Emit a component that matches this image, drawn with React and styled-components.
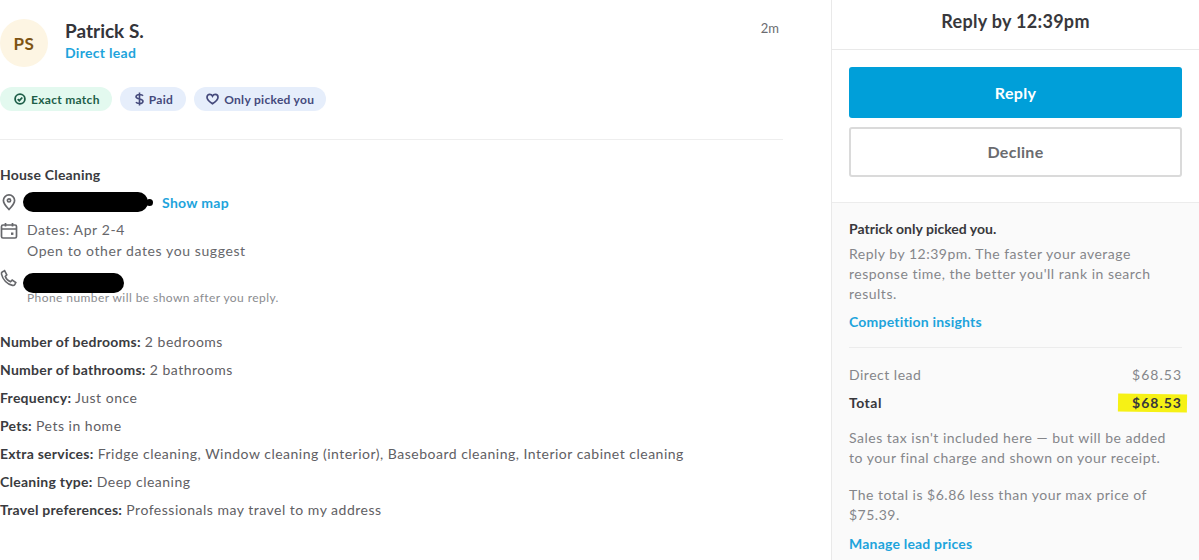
import styled, { createGlobalStyle } from "styled-components";

const GlobalStyle = createGlobalStyle`
  html, body {
    margin: 0;
    padding: 0;
    background: #fff;
  }
  body {
    font-family: "Lato", "Open Sans", sans-serif;
    color: #2f3033;
  }
`;

const Page = styled.div`
  display: flex;
  width: 1199px;
  height: 560px;
  overflow: hidden;
`;

const Main = styled.div`
  width: 783px;
  margin-right: 48px;
  flex-shrink: 0;
`;

const Head = styled.div`
  display: flex;
  align-items: flex-start;
  padding-top: 19px;
`;

const Avatar = styled.div`
  width: 48px;
  height: 48px;
  border-radius: 50%;
  background: #fdf5e3;
  color: #7d5413;
  font-weight: 700;
  font-size: 17px;
  letter-spacing: 0.5px;
  display: flex;
  align-items: center;
  justify-content: center;
`;

const HeadText = styled.div`
  margin-left: 17px;
  flex: 1;
`;

const Name = styled.div`
  font-size: 19px;
  font-weight: 700;
  line-height: 24px;
  color: #33343a;
`;

const DirectLead = styled.div`
  font-size: 14px;
  font-weight: 700;
  line-height: 20px;
  color: #1ea4dc;
  letter-spacing: 0.3px;
`;

const Time = styled.div`
  font-size: 13px;
  color: #6b6c70;
  margin-top: 1px;
  margin-right: 4px;
`;

const Tags = styled.div`
  display: flex;
  gap: 8px;
  margin-top: 20px;
  padding-bottom: 28px;
  border-bottom: 1px solid #eeeeee;
`;

const Tag = styled.div`
  display: flex;
  align-items: center;
  gap: 5px;
  height: 24px;
  padding: 0 ${(props) => props.$right || 12}px 0 ${(props) => props.$left || 12}px;
  border-radius: 12px;
  font-size: 12px;
  font-weight: 700;
  letter-spacing: 0.3px;
  background: ${(props) => (props.$green ? "#e3f9ef" : "#e6eefb")};
  color: ${(props) => (props.$green ? "#1d5e48" : "#454a7c")};
`;

const Section = styled.div`
  margin-top: 25px;
`;

const Service = styled.div`
  font-size: 14px;
  font-weight: 700;
  line-height: 20px;
  letter-spacing: 0.2px;
  color: #3a3b40;
`;

const InfoRow = styled.div`
  display: flex;
  align-items: flex-start;
  gap: 9px;
  margin-top: ${(props) => props.$top}px;
  font-size: 14px;
  line-height: 21px;
  color: #66676b;
  letter-spacing: 0.6px;
`;

const IconSlot = styled.div`
  width: 18px;
  height: 24px;
  margin-top: ${(props) => props.$offset}px;
  display: flex;
  align-items: center;
  justify-content: center;
  flex-shrink: 0;
  color: #66676b;
`;

const Redacted = styled.div`
  position: relative;
  width: ${(props) => props.$width}px;
  height: 20px;
  background: #000;
  border-radius: 10px;
  flex-shrink: 0;
  margin: ${(props) => props.$top}px 0 0 -4px;

  &::after {
    content: "";
    display: ${(props) => (props.$bump ? "block" : "none")};
    position: absolute;
    right: -5px;
    top: 7px;
    width: 7px;
    height: 7px;
    border-radius: 50%;
    background: #000;
  }
`;

const MapLink = styled.span`
  color: #1ea4dc;
  font-weight: 700;
  font-size: 14px;
  line-height: 24px;
  letter-spacing: 0.3px;
  margin-left: 5px;
`;

const Hint = styled.div`
  font-size: 12px;
  line-height: 14px;
  margin-top: -2px;
  color: #8b8c90;
  letter-spacing: 0.42px;
`;

const Details = styled.div`
  margin-top: 23px;
`;

const Detail = styled.div`
  font-size: 14px;
  line-height: 28px;
  color: #5f6064;
  letter-spacing: 0.5px;

  b {
    font-weight: 700;
    color: #3a3b40;
    letter-spacing: 0.25px;
  }
`;

const Side = styled.div`
  flex: 1;
  border-left: 1px solid #e9e9e9;
  display: flex;
  flex-direction: column;
`;

const SideHead = styled.div`
  height: 49px;
  border-bottom: 1px solid #e9e9e9;
  text-align: center;
  font-size: 18px;
  font-weight: 700;
  line-height: 43px;
  letter-spacing: 0.3px;
  color: #38383c;
`;

const Actions = styled.div`
  padding: 17px 17px 25px;
  border-bottom: 1px solid #ececec;
  display: flex;
  flex-direction: column;
  gap: 9px;
`;

const Button = styled.div`
  height: ${(props) => (props.$primary ? 51 : 50)}px;
  padding-bottom: ${(props) => (props.$primary ? 0 : 2)}px;
  border-radius: 3px;
  display: flex;
  align-items: center;
  justify-content: center;
  font-size: 16px;
  font-weight: 700;
  letter-spacing: 0.3px;
  box-sizing: border-box;
  background: ${(props) => (props.$primary ? "#009fd9" : "#fff")};
  color: ${(props) => (props.$primary ? "#fff" : "#6a6b6f")};
  border: ${(props) => (props.$primary ? "none" : "2px solid #dadada")};
`;

const Notes = styled.div`
  flex: 1;
  background: #fafafa;
  padding: 16px 17px 0;
`;

const NoteTitle = styled.div`
  font-size: 14px;
  font-weight: 700;
  line-height: 20px;
  color: #38383c;
`;

const NoteText = styled.div`
  font-size: 14px;
  line-height: 20px;
  color: #85868a;
  letter-spacing: 0.5px;
  margin-top: ${(props) => props.$top}px;
`;

const NoteLink = styled.div`
  color: #1ea4dc;
  font-weight: 700;
  font-size: 14px;
  line-height: 20px;
  letter-spacing: 0.2px;
  margin-top: ${(props) => props.$top}px;
`;

const Rule = styled.div`
  height: 1px;
  background: #ececec;
  margin: 15px 0 17px;
`;

const PriceRow = styled.div`
  display: flex;
  justify-content: space-between;
  font-size: 14px;
  line-height: 20px;
  letter-spacing: 0.5px;
  margin-bottom: 8px;
  color: ${(props) => (props.$total ? "#38383c" : "#85868a")};
  font-weight: ${(props) => (props.$total ? 700 : 400)};
`;

const Price = styled.span`
  letter-spacing: 1px;
`;

const Highlight = styled(Price)`
  position: relative;
  z-index: 0;

  &::before {
    content: "";
    position: absolute;
    z-index: -1;
    left: -14px;
    right: -5px;
    top: 1px;
    bottom: 1px;
    background: #f6f115;
    transform: rotate(1deg);
  }
`;

const Pin = () => (
  <svg width="16" height="18" viewBox="0 0 16 18" fill="none" stroke="currentColor" strokeWidth="1.7">
    <path d="M8 16.500c-3.500-3.600-5.600-6.400-5.600-9a5.600 5.600 0 0 1 11.200 0c0 2.600-2.100 5.400-5.600 9z" />
    <circle cx="8" cy="7.400" r="1.600" />
  </svg>
);

const Calendar = () => (
  <svg width="18" height="18" viewBox="0 0 18 18" fill="none" stroke="currentColor" strokeWidth="1.7">
    <rect x="1.500" y="3" width="15" height="13" rx="1.500" />
    <path d="M1.500 7h15M5.500 1v3.500M12.500 1v3.500" />
    <rect x="11" y="10.500" width="2.400" height="2.400" fill="currentColor" stroke="none" />
  </svg>
);

const Phone = () => (
  <svg width="18" height="18" viewBox="0 0 18 18" fill="none" stroke="currentColor" strokeWidth="1.6">
    <path d="M4.600 1.600 2.200 3c-.7.500-.9 1.300-.7 2.200 1.100 5.300 5.900 10.300 11 11.200 1 .2 1.800-.1 2.300-.9l1-2-3.600-2.400-1.700 1.600C7.900 11.700 6 9.500 5.300 7.400l1.500-1.600z" />
  </svg>
);

const CheckCircle = () => (
  <svg width="12" height="12" viewBox="0 0 12 12" fill="none" stroke="currentColor" strokeWidth="1.8">
    <circle cx="6" cy="6" r="4.900" />
    <path d="m3.700 6.100 1.600 1.600 3-3.200" />
  </svg>
);

const Dollar = () => (
  <svg width="9" height="14" viewBox="0 0 9 13" fill="none" stroke="currentColor" strokeWidth="1.6">
    <path d="M4.500 0v13M8 3.200C7.400 2.300 6.200 2 4.500 2 2.500 2 1 2.900 1 4.300c0 3 7 1.500 7 4.400C8 10.100 6.500 11 4.500 11 2.700 11 1.500 10.500 1 9.600" />
  </svg>
);

const Heart = () => (
  <svg width="13" height="12" viewBox="0 0 13 12" fill="none" stroke="currentColor" strokeWidth="1.7">
    <path d="M6.500 10.800C3 8.400 1 6.500 1 4.200 1 2.500 2.300 1.300 3.700 1.300c1.200 0 2.200.6 2.800 1.800.6-1.200 1.600-1.800 2.800-1.800 1.400 0 2.700 1.200 2.700 2.900 0 2.300-2 4.200-5.500 6.600z" />
  </svg>
);

const DETAILS = [
  ["Number of bedrooms:", "2 bedrooms"],
  ["Number of bathrooms:", "2 bathrooms"],
  ["Frequency:", "Just once"],
  ["Pets:", "Pets in home"],
  ["Extra services:", "Fridge cleaning, Window cleaning (interior), Baseboard cleaning, Interior cabinet cleaning"],
  ["Cleaning type:", "Deep cleaning"],
  ["Travel preferences:", "Professionals may travel to my address"],
];

const App = () => {
  return (
    <Page>
      <GlobalStyle />
      <Main>
        <Head>
          <Avatar>PS</Avatar>
          <HeadText>
            <Name>Patrick S.</Name>
            <DirectLead>Direct lead</DirectLead>
          </HeadText>
          <Time>2m</Time>
        </Head>
        <Tags>
          <Tag $green $left={14}>
            <CheckCircle />
            Exact match
          </Tag>
          <Tag $left={15} $right={13}>
            <Dollar />
            Paid
          </Tag>
          <Tag>
            <Heart />
            Only picked you
          </Tag>
        </Tags>
        <Section>
          <Service>House Cleaning</Service>
          <InfoRow $top={6}>
            <IconSlot $offset={-1}>
              <Pin />
            </IconSlot>
            <Redacted $width={125} $top={1} $bump />
            <MapLink>Show map</MapLink>
          </InfoRow>
          <InfoRow $top={4}>
            <IconSlot $offset={0}>
              <Calendar />
            </IconSlot>
            <div>
              Dates: Apr 2-4
              <br />
              Open to other dates you suggest
            </div>
          </InfoRow>
          <InfoRow $top={10}>
            <IconSlot $offset={-5}>
              <Phone />
            </IconSlot>
            <div>
              <Redacted $width={101} $top={2} />
              <Hint>Phone number will be shown after you reply.</Hint>
            </div>
          </InfoRow>
        </Section>
        <Details>
          {DETAILS.map(([label, value]) => (
            <Detail key={label}>
              <b>{label}</b> {value}
            </Detail>
          ))}
        </Details>
      </Main>
      <Side>
        <SideHead>Reply by 12:39pm</SideHead>
        <Actions>
          <Button $primary>Reply</Button>
          <Button>Decline</Button>
        </Actions>
        <Notes>
          <NoteTitle>Patrick only picked you.</NoteTitle>
          <NoteText $top={5}>
            Reply by 12:39pm. The faster your average response time, the better you'll rank in search results.
          </NoteText>
          <NoteLink $top={8}>Competition insights</NoteLink>
          <Rule />
          <PriceRow>
            <span>Direct lead</span>
            <Price>$68.53</Price>
          </PriceRow>
          <PriceRow $total>
            <span>Total</span>
            <Highlight>$68.53</Highlight>
          </PriceRow>
          <NoteText $top={15}>
            Sales tax isn't included here — but will be added to your final charge and shown on your receipt.
          </NoteText>
          <NoteText $top={17}>The total is $6.86 less than your max price of $75.39.</NoteText>
          <NoteLink $top={9}>Manage lead prices</NoteLink>
        </Notes>
      </Side>
    </Page>
  );
};

export default App;
